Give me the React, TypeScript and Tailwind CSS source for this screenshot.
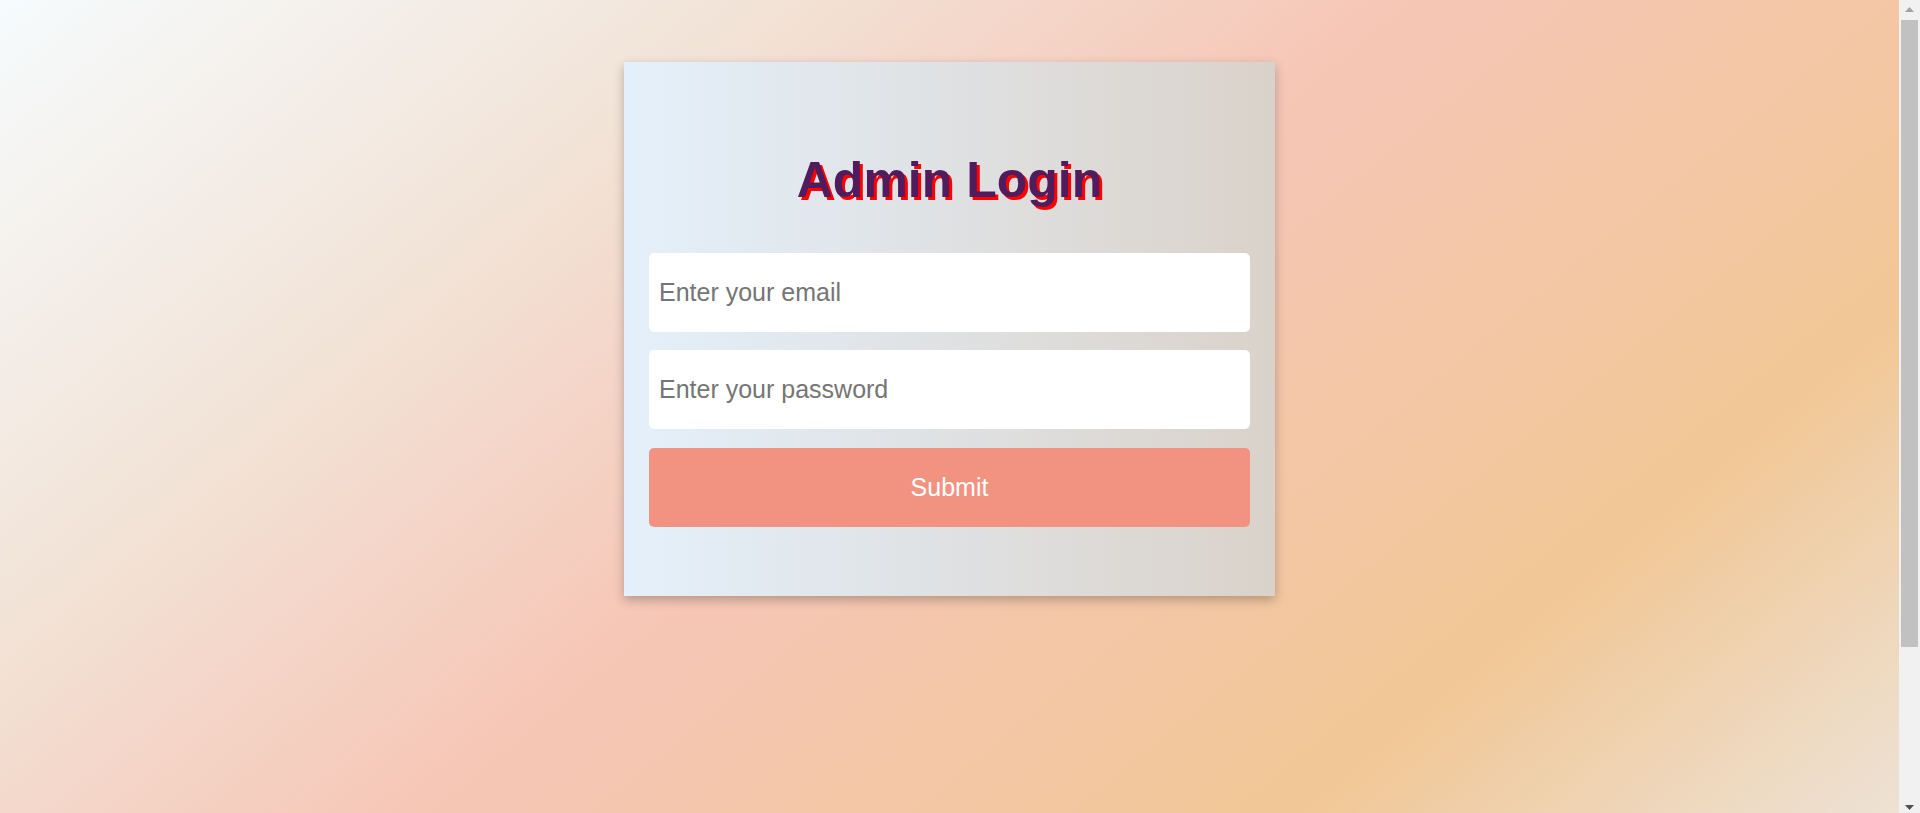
const ScrollBar = () => {
  return (
    <div className="w-[21px] h-full shrink-0 bg-[#f1f1f1] flex flex-col items-center">
      <div className="h-[20px] pt-[7px]">
        <svg width="9" height="5" viewBox="0 0 9 5">
          <polygon points="4.5,0 9,5 0,5" fill="#a3a3a3" />
        </svg>
      </div>
      <div className="w-[17px] h-[627px] bg-[#c1c1c1]" />
      <div className="flex-1" />
      <div className="h-[20px] pt-[12px]">
        <svg width="9" height="5" viewBox="0 0 9 5">
          <polygon points="0,0 9,0 4.5,5" fill="#505050" />
        </svg>
      </div>
    </div>
  );
};

const AdminLogin = () => {
  return (
    <div className="min-h-[1570px] w-full bg-[linear-gradient(to_bottom_right,#f6fbfd_0%,#f2e3d7_20%,#f6c6b6_37%,#f1c796_60%,#ede2d5_76%,#ebe6e0_100%)]">
      <div className="flex justify-center pt-[62px]">
        {/* Login card */}
        <div className="w-[651px] h-[534px] px-[25px] pt-[90px] flex flex-col bg-linear-to-r from-[#e4f0fb] to-[#dad2ca] shadow-[0_4px_10px_rgba(0,0,0,0.25)]">
          <h1 className="text-center text-[50px] leading-[56px] font-bold text-[#511c5d] [text-shadow:3px_3px_0_#ff0000]">
            Admin Login
          </h1>

          <form className="mt-[45px] flex flex-col" onSubmit={(e) => e.preventDefault()}>
            <input
              type="email"
              placeholder="Enter your email"
              className="h-[79px] w-full rounded-[5px] bg-white pl-[10px] text-[25px] text-black outline-none placeholder:text-[#757575]"
            />
            <input
              type="password"
              placeholder="Enter your password"
              className="mt-[18px] h-[79px] w-full rounded-[5px] bg-white pl-[10px] text-[25px] text-black outline-none placeholder:text-[#757575]"
            />
            <button
              type="submit"
              className="mt-[19px] h-[79px] w-full rounded-[5px] bg-[#f29382] text-[25px] text-white cursor-pointer"
            >
              Submit
            </button>
          </form>
        </div>
      </div>
    </div>
  );
};

export default function App() {
  return (
    <div className="h-screen w-full flex overflow-hidden font-['Liberation_Sans',Arial,sans-serif]">
      <div className="flex-1 h-full overflow-hidden">
        <AdminLogin />
      </div>
      <ScrollBar />
    </div>
  );
}
